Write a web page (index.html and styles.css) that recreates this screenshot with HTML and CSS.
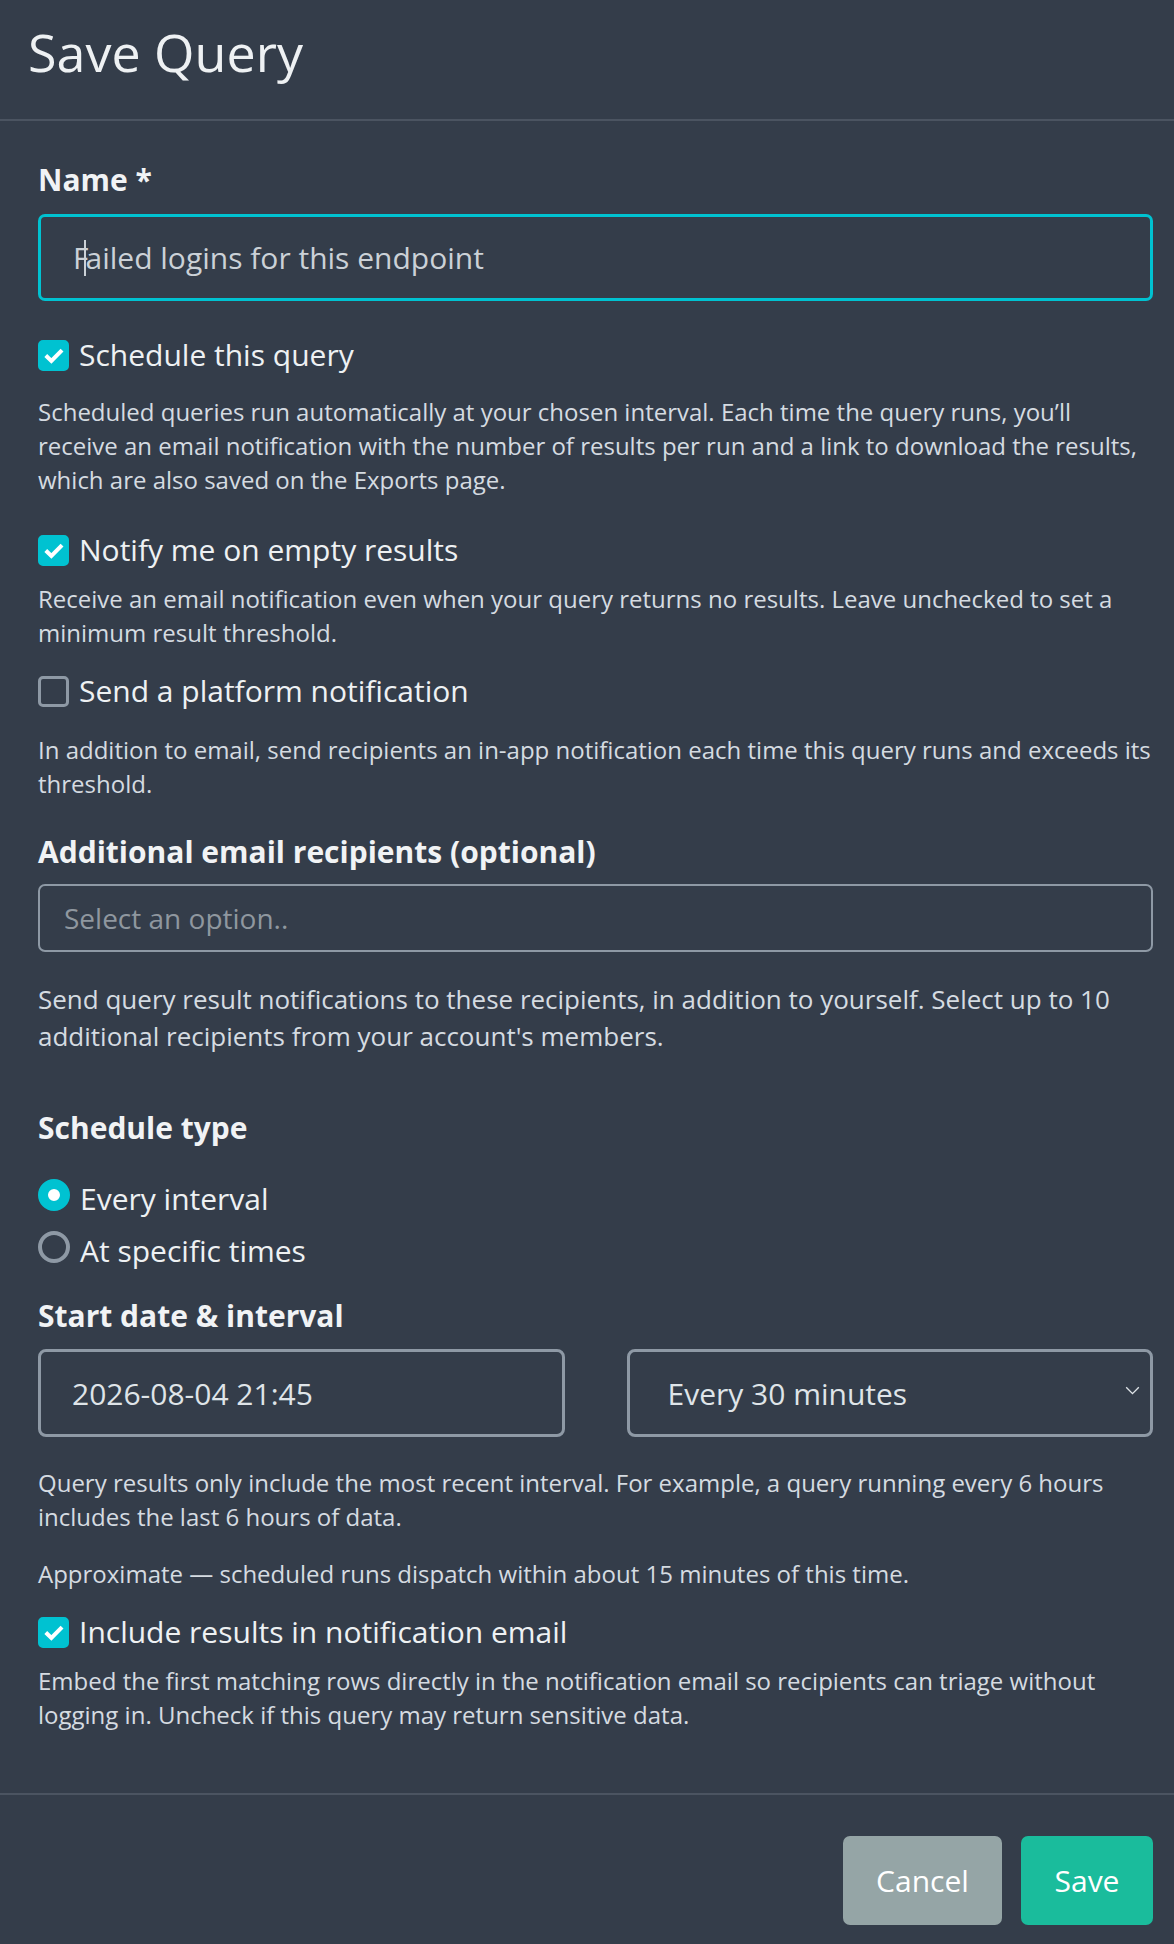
FILE: index.html
```html
<!DOCTYPE html>
<html lang="en">
<head>
    <meta charset="UTF-8">
    <meta name="viewport" content="width=device-width, initial-scale=1.0">
    <title>Save Query</title>
    <link rel="stylesheet" href="styles.css">
</head>
<body>
    <div class="modal">
        <div class="modal-header">
            <h1>Save Query</h1>
        </div>

        <div class="modal-body">
            <label class="field-label name-label" for="queryName">Name *</label>
            <div class="text-input focused" id="queryName">F<span class="caret"></span>ailed logins for this endpoint</div>

            <div class="check-row row-schedule">
                <span class="checkbox checked"><svg viewBox="0 0 16 16"><path d="M3.3 8.3l3.2 3.1 6.1-6.2"/></svg></span>
                <span class="check-label">Schedule this query</span>
            </div>
            <p class="help help-schedule">Scheduled queries run automatically at your chosen interval. Each time the query runs, you’ll receive an email notification with the number of results per run and a link to download the results, which are also saved on the Exports page.</p>

            <div class="check-row row-empty">
                <span class="checkbox checked"><svg viewBox="0 0 16 16"><path d="M3.3 8.3l3.2 3.1 6.1-6.2"/></svg></span>
                <span class="check-label">Notify me on empty results</span>
            </div>
            <p class="help help-empty">Receive an email notification even when your query returns no results. Leave unchecked to set a minimum result threshold.</p>

            <div class="check-row row-platform">
                <span class="checkbox"></span>
                <span class="check-label">Send a platform notification</span>
            </div>
            <p class="help help-platform">In addition to email, send recipients an in-app notification each time this query runs and exceeds its threshold.</p>

            <label class="field-label recipients-label">Additional email recipients (optional)</label>
            <div class="multi-select"><span class="placeholder">Select an option..</span></div>
            <p class="help help-large">Send query result notifications to these recipients, in addition to yourself. Select up to 10 additional recipients from your account's members.</p>

            <label class="field-label type-label">Schedule type</label>
            <div class="radio-group">
                <div class="check-row">
                    <span class="radio checked"></span>
                    <span class="check-label">Every interval</span>
                </div>
                <div class="check-row">
                    <span class="radio"></span>
                    <span class="check-label">At specific times</span>
                </div>
            </div>

            <label class="field-label start-label">Start date &amp; interval</label>
            <div class="split-row">
                <div class="box-input">2026-08-04 21:45</div>
                <div class="box-input select-box">
                    <span class="select-value">Every 30 minutes</span>
                    <svg class="chevron" viewBox="0 0 16 10"><path d="M1 1.5l7 7 7-7"/></svg>
                </div>
            </div>
            <p class="help help-interval">Query results only include the most recent interval. For example, a query running every 6 hours includes the last 6 hours of data.</p>
            <p class="help help-approx">Approximate — scheduled runs dispatch within about 15 minutes of this time.</p>

            <div class="check-row row-include">
                <span class="checkbox checked"><svg viewBox="0 0 16 16"><path d="M3.3 8.3l3.2 3.1 6.1-6.2"/></svg></span>
                <span class="check-label">Include results in notification email</span>
            </div>
            <p class="help help-include">Embed the first matching rows directly in the notification email so recipients can triage without logging in. Uncheck if this query may return sensitive data.</p>
        </div>

        <div class="modal-footer">
            <button class="btn btn-cancel">Cancel</button>
            <button class="btn btn-save">Save</button>
        </div>
    </div>
</body>
</html>
```

FILE: styles.css
```css
body {
    margin: 0;
    background-color: #343d4a;
    font-family: 'Open Sans', 'Noto Sans', sans-serif;
    color: #ecf0f1;
}
.modal {
    width: 1174px;
    min-height: 1944px;
    background-color: #343d4a;
}
.modal-header {
    padding: 16px 28px 32px 28px;
    border-bottom: 2px solid #4b5461;
}
.modal-header h1 {
    margin: 0;
    font-size: 52px;
    font-weight: 400;
    line-height: 71px;
    color: #eef1f3;
}
.modal-body {
    padding: 41px 21px 61px 38px;
}
.field-label {
    display: block;
    font-size: 30px;
    font-weight: 700;
    line-height: 36px;
    color: #f1f3f5;
}
.text-input {
    margin-top: 16px;
    height: 81px;
    border: 3px solid #00c2d1;
    border-radius: 7px;
    padding: 0 32px;
    display: flex;
    align-items: center;
    font-size: 30px;
    color: #cbd1d7;
}
/* text cursor sitting inside the focused field */
.caret {
    display: inline-block;
    width: 2px;
    height: 36px;
    margin: 0 -1px 0 -4px;
    background-color: #cbd1d7;
}
.check-row {
    display: flex;
    align-items: center;
    height: 36px;
}
.check-label {
    margin-left: 10px;
    font-size: 30px;
    line-height: 36px;
    color: #eef1f3;
}
.checkbox {
    flex: none;
    box-sizing: border-box;
    width: 31px;
    height: 31px;
    border: 3px solid #8e99a5;
    border-radius: 5px;
    display: flex;
    align-items: center;
    justify-content: center;
}
.checkbox.checked {
    background-color: #00c2d1;
    border-color: #00c2d1;
}
.checkbox svg {
    flex: none;
    width: 28px;
    height: 28px;
    fill: none;
    stroke: #ffffff;
    stroke-width: 2.3;
    stroke-linejoin: miter;
}
.radio {
    flex: none;
    box-sizing: border-box;
    width: 32px;
    height: 32px;
    border: 4px solid #8e99a5;
    border-radius: 50%;
    margin-top: -8px;
}
.radio.checked {
    border: 10px solid #00c2d1;
    background-color: #ffffff;
}
.help {
    margin: 0;
    font-size: 24px;
    line-height: 34px;
    color: #d5dbe1;
}
.row-schedule { margin-top: 36px; }
.help-schedule { margin-top: 22px; }
.row-empty { margin-top: 35px; }
.help-empty { margin-top: 14px; }
.row-platform { margin-top: 23px; }
.help-platform { margin-top: 24px; }
.recipients-label { margin-top: 33px; }
.multi-select {
    margin-top: 14px;
    height: 64px;
    border: 2px solid #8e99a5;
    border-radius: 7px;
    padding: 0 24px;
    display: flex;
    align-items: center;
}
.placeholder {
    font-size: 28px;
    color: #8f979f;
}
.help-large {
    margin-top: 29px;
    font-size: 26px;
    line-height: 37px;
}
.type-label { margin-top: 55px; }
.radio-group {
    margin-top: 35px;
    display: flex;
    flex-direction: column;
    gap: 16px;
}
.start-label { margin-top: 29px; }
.split-row {
    margin-top: 15px;
    display: grid;
    grid-template-columns: 1fr 1fr;
    gap: 62px;
}
.box-input {
    height: 82px;
    border: 3px solid #8e99a5;
    border-radius: 8px;
    padding: 0 31px;
    display: flex;
    align-items: center;
    font-size: 30px;
    color: #dfe4e8;
}
.select-box {
    justify-content: space-between;
    padding: 0 10px 0 38px;
}
.chevron {
    width: 15px;
    height: 9px;
    fill: none;
    stroke: #dfe4e8;
    stroke-width: 1.5;
    margin-bottom: 6px;
}
.help-interval { margin-top: 29px; }
.help-approx { margin-top: 23px; }
.row-include { margin-top: 23px; }
.help-include { margin-top: 14px; }
.modal-footer {
    border-top: 2px solid #4b5461;
    padding: 41px 21px 20px 0;
    display: flex;
    justify-content: flex-end;
    gap: 19px;
}
.btn {
    height: 89px;
    border: none;
    border-radius: 7px;
    font-family: 'Open Sans', 'Noto Sans', sans-serif;
    font-size: 30px;
    color: #ffffff;
    cursor: pointer;
}
.btn-cancel {
    width: 159px;
    background-color: #95a5a6;
}
.btn-save {
    width: 132px;
    background-color: #1abc9c;
}
```
